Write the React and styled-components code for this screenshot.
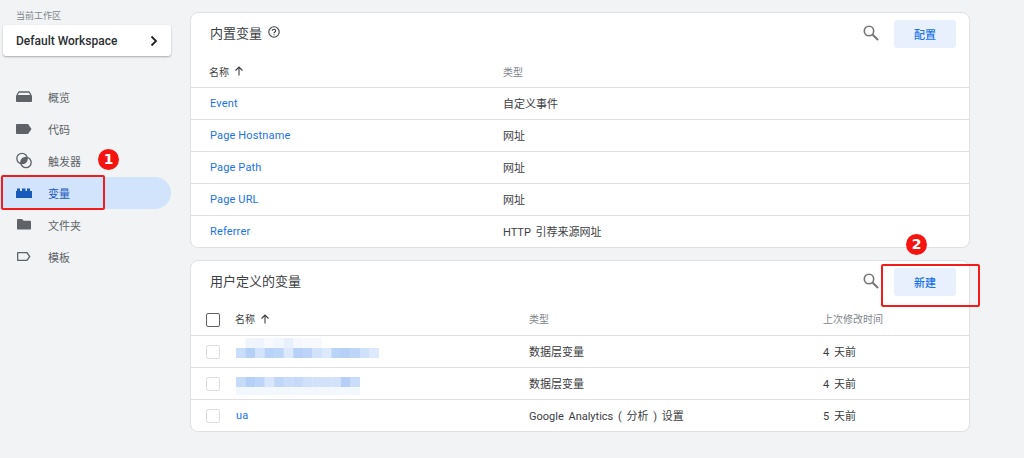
import React from "react";
import styled, { createGlobalStyle } from "styled-components";

const Global = createGlobalStyle`
  html, body { margin: 0; padding: 0; background: #f1f3f4; }
  body { font-family: Roboto, "Noto Sans CJK SC", sans-serif; color: #3c4043; }
  * { box-sizing: border-box; }
`;

const Page = styled.div`
  position: relative;
  width: 1024px;
  height: 458px;
  overflow: hidden;
  display: flex;
  background: #f1f3f4;
`;

const Sidebar = styled.aside`
  width: 190px;
  flex: none;
  padding-top: 11px;
`;

const WorkspaceLabel = styled.div`
  font-size: 9px;
  line-height: 11px;
  color: #80868b;
  padding-left: 16px;
  margin-bottom: 3px;
`;

const WorkspaceCard = styled.div`
  width: 168px;
  height: 31px;
  margin-left: 3px;
  padding: 0 12px 0 13px;
  display: flex;
  align-items: center;
  justify-content: space-between;
  background: #fff;
  border-radius: 3px;
  box-shadow: 0 1px 2px rgba(60, 64, 67, 0.4);
  font-size: 12px;
  font-weight: 500;
  color: #2b2e31;
`;

const Nav = styled.nav`
  margin-top: 25px;
  display: flex;
  flex-direction: column;
  width: 171px;
`;

const NavItem = styled.div`
  height: 32px;
  display: flex;
  align-items: center;
  padding-left: 16px;
  gap: 16px;
  font-size: 11px;
  border-radius: ${(p) => (p.$active ? "0 16px 16px 0" : "0")};
  background: ${(p) => (p.$active ? "#d2e3fc" : "transparent")};
  color: ${(p) => (p.$active ? "#185abc" : "#5f6368")};
  svg { flex: none; fill: currentColor; stroke: currentColor; stroke-width: 0; overflow: visible; }
`;

const Main = styled.main`
  width: 780px;
  flex: none;
  padding-top: 12px;
  display: flex;
  flex-direction: column;
  gap: 12px;
`;

const Card = styled.section`
  background: #fff;
  border: 1px solid #e0e0e0;
  border-radius: 8px;
  overflow: hidden;
`;

const CardHeader = styled.header`
  height: ${(p) => p.$height}px;
  padding: 7px 13px 0 19px;
  display: flex;
  align-items: flex-start;
`;

const CardTitle = styled.h2`
  margin: 0;
  height: 24px;
  display: flex;
  align-items: center;
  gap: 6px;
  font-size: 13px;
  font-weight: 400;
  color: #3c4043;
`;

const HeaderActions = styled.div`
  margin-left: auto;
  display: flex;
  align-items: center;
  height: 28px;
  gap: 14px;
  color: #757575;
  > svg { margin-bottom: 3px; }
`;

const ActionButton = styled.button`
  width: 62px;
  height: 28px;
  border: 0;
  padding: 0;
  border-radius: 3px;
  background: #e8f0fe;
  color: #1a73e8;
  font: 500 11px Roboto, "Noto Sans CJK SC", sans-serif;
`;

const Row = styled.div`
  display: grid;
  grid-template-columns: ${(p) => p.$columns};
  align-items: center;
  height: ${(p) => p.$height || 32}px;
  padding-left: ${(p) => p.$pad}px;
  border-bottom: ${(p) => (p.$last ? "0" : "1px solid #e0e0e0")};
  font-size: 11px;
  word-spacing: 2px;
  color: #3c4043;
`;

const TextCell = styled.span`
  padding-bottom: 2px;
`;

const HeadCell = styled.div`
  display: flex;
  align-items: center;
  gap: 5px;
  padding-bottom: 2px;
  margin-left: ${(p) => (p.$strong ? "-1px" : "0")};
  font-size: 10px;
  color: ${(p) => (p.$strong ? "#3c4043" : "#80868b")};
`;

const LinkText = styled.span`
  color: #1a73e8;
  font-size: 11px;
  letter-spacing: 0.15px;
  word-spacing: 0;
`;

const Check = styled.span`
  display: block;
  width: 14px;
  height: 14px;
  border-radius: 2px;
  border: ${(p) => (p.$dark ? "1.5px solid #5f6368" : "1.5px solid #dadce0")};
`;

const Callout = styled.div`
  position: absolute;
  left: ${(p) => p.$x}px;
  top: ${(p) => p.$y}px;
  width: ${(p) => p.$w}px;
  height: ${(p) => p.$h}px;
  border: 2px solid #f11d1d;
  border-radius: 2px;
  pointer-events: none;
`;

const Badge = styled.div`
  position: absolute;
  left: ${(p) => p.$x}px;
  top: ${(p) => p.$y}px;
  width: 21px;
  height: 21px;
  border-radius: 50%;
  background: #f5140f;
  color: #fff;
  font: 700 14px/21px "DejaVu Sans", sans-serif;
  text-align: center;
`;

const MosaicSvg = styled.svg`
  display: block;
`;

const Search = () => (
  <svg width="18" height="18" viewBox="0 0 18 18" fill="none" stroke="currentColor">
    <circle cx="7" cy="7" r="4.7" strokeWidth="1.6" />
    <path d="M10.5 10.5 16 16" strokeWidth="2" />
  </svg>
);

const ArrowUp = () => (
  <svg width="10" height="10" viewBox="0 0 10 10" fill="none" stroke="#3c4043" strokeWidth="1.1">
    <path d="M5 9.5V1M1.5 4.5 5 1l3.5 3.5" />
  </svg>
);

const Help = () => (
  <svg width="12" height="12" viewBox="0 0 12 12" fill="none" stroke="#3c4043">
    <circle cx="6" cy="6" r="5.2" strokeWidth="1.1" />
    <path d="M4.3 4.8C4.3 3.8 5 3.2 6 3.2s1.7.6 1.7 1.5C7.7 6 6 6 6 7.3" strokeWidth="1.1" />
    <path d="M6 8.2v1.1" strokeWidth="1.1" />
  </svg>
);

const Chevron = () => (
  <svg width="10" height="12" viewBox="0 0 10 12" fill="none" stroke="#202124" strokeWidth="1.8">
    <path d="M2.5 1.5 7 6l-4.5 4.5" />
  </svg>
);

const icons = {
  overview: (
    <g>
      <path d="M1 5 3 2h10l2 3" fill="none" style={{ strokeWidth: 1.3 }} />
      <path d="M.8 5h14.4c.4 0 .8.4.8.8v5.4c0 .5-.4.8-.8.8H.8c-.4 0-.8-.3-.8-.8V5.8C0 5.4.4 5 .8 5Z" />
    </g>
  ),
  tag: <path d="M1 2h10.5c.4 0 .7.2.9.4L15.5 7l-3.1 4.6c-.2.2-.5.4-.9.4H1c-.6 0-1-.4-1-1V3c0-.6.4-1 1-1Z" />,
  trigger: (
    <g>
      <circle cx="6" cy="4.5" r="5.2" fill="none" style={{ strokeWidth: 1.3 }} />
      <circle cx="10" cy="8.5" r="5.2" fill="none" style={{ strokeWidth: 1.3 }} />
      <path d="M11 3.4A5.2 5.2 0 0 1 4.9 9.6 5.2 5.2 0 0 1 11 3.4Z" />
    </g>
  ),
  variable: <path d="M0 5h1V2.5h3V5h2V2.5h3.5V5H11V2.5h3V5h2v7H0Z" />,
  folder: <path d="M2 1h4l1.7 1.8H14c.6 0 1 .5 1 1v6.700c0 .6-.4 1-1 1H2c-.6 0-1-.4-1-1V2c0-.5.4-1 1-1Z" />,
  template: <path fillRule="evenodd" d="M2 2h8.800c.4 0 .7.2.9.4l2.800 4.100-2.800 4.100c-.2.2-.5.4-.9.4H2c-.6 0-1-.4-1-1V3c0-.6.4-1 1-1Zm.3 1.300v6.400h8.200l2.400-3.200-2.400-3.200Z" />,
};

const NavIcon = ({ name }) => (
  <svg width="16" height="14" viewBox="0 0 16 14">{icons[name]}</svg>
);

const mosaics = {
  first: {
    w: 143,
    y: 12,
    pale: ["#eff4fd", "#eef3fd", "#f7f9fe", "#f2f6fe", "#e9f0fd", "#f4f7fe", "#f7f9fe", "#f7f9fe"],
    bar: ["#c9dcfa", "#b4cff8", "#d3e3fb", "#b9d2f9", "#bdd5f9", "#dce8fc", "#b7d0f8", "#bcd4f9", "#d3e2fb", "#dde9fc", "#bad3f9", "#b7d0f8", "#bdd5f9", "#cfe0fb", "#dde9fc"],
  },
  second: {
    w: 124,
    y: 9,
    bar: ["#c6dafa", "#b4cff8", "#bdd5f9", "#d8e5fc", "#c1d7f9", "#c9dcfa", "#c5dafa", "#cfe0fb", "#d2e2fb", "#d2e2fb", "#d2e2fb", "#b5cff8", "#c9dcfa"],
  },
};

const Mosaic = ({ kind }) => {
  const m = mosaics[kind];
  const cw = m.w / m.bar.length;
  return (
    <MosaicSvg width={m.w} height="31" viewBox={`0 0 ${m.w} 31`}>
      {kind === "second" && <rect x="0" y={m.y + 10} width={m.w} height="8" fill="#f3f7fe" />}
      {m.pale && m.pale.map((color, i) => (
        <rect key={i} x={(i + 1) * 9.5} y="2" width="9.5" height="10" fill={color} />
      ))}
      {m.bar.map((color, i) => (
        <rect key={i} x={i * cw} y={m.y} width={cw + 0.3} height="10" fill={color} />
      ))}
    </MosaicSvg>
  );
};

const nav = [
  ["overview", "概览"],
  ["tag", "代码"],
  ["trigger", "触发器"],
  ["variable", "变量", true],
  ["folder", "文件夹"],
  ["template", "模板"],
];

const builtIn = [
  ["Event", "自定义事件"],
  ["Page Hostname", "网址"],
  ["Page Path", "网址"],
  ["Page URL", "网址"],
  ["Referrer", "HTTP 引荐来源网址"],
];

const BUILTIN_COLS = "293px 1fr";
const USER_COLS = "30px 293px 294px 1fr";

export default function App() {
  return (
    <Page>
      <Global />
      <Sidebar>
        <WorkspaceLabel>当前工作区</WorkspaceLabel>
        <WorkspaceCard>
          Default Workspace
          <Chevron />
        </WorkspaceCard>
        <Nav>
          {nav.map(([icon, label, active]) => (
            <NavItem key={icon} $active={active}>
              <NavIcon name={icon} />
              {label}
            </NavItem>
          ))}
        </Nav>
      </Sidebar>
      <Main>
        <Card>
          <CardHeader $height={44}>
            <CardTitle>
              内置变量
              <Help />
            </CardTitle>
            <HeaderActions>
              <Search />
              <ActionButton>配置</ActionButton>
            </HeaderActions>
          </CardHeader>
          <Row $columns={BUILTIN_COLS} $pad={19} $height={31}>
            <HeadCell $strong>名称 <ArrowUp /></HeadCell>
            <HeadCell>类型</HeadCell>
          </Row>
          {builtIn.map(([name, type], i) => {
            const last = i === builtIn.length - 1;
            return (
              <Row key={name} $columns={BUILTIN_COLS} $pad={19} $last={last} $height={last ? 31 : 32}>
                <LinkText>{name}</LinkText>
                <TextCell>{type}</TextCell>
              </Row>
            );
          })}
        </Card>
        <Card>
          <CardHeader $height={43}>
            <CardTitle>用户定义的变量</CardTitle>
            <HeaderActions>
              <Search />
              <ActionButton>新建</ActionButton>
            </HeaderActions>
          </CardHeader>
          <Row $columns={USER_COLS} $pad={15} $height={32}>
            <Check $dark />
            <HeadCell $strong>名称 <ArrowUp /></HeadCell>
            <HeadCell>类型</HeadCell>
            <HeadCell>上次修改时间</HeadCell>
          </Row>
          <Row $columns={USER_COLS} $pad={15}>
            <Check />
            <Mosaic kind="first" />
            <TextCell>数据层变量</TextCell>
            <TextCell>4 天前</TextCell>
          </Row>
          <Row $columns={USER_COLS} $pad={15}>
            <Check />
            <Mosaic kind="second" />
            <TextCell>数据层变量</TextCell>
            <TextCell>4 天前</TextCell>
          </Row>
          <Row $columns={USER_COLS} $pad={15} $last $height={31}>
            <Check />
            <LinkText>ua</LinkText>
            <TextCell>Google Analytics ( 分析 ) 设置</TextCell>
            <TextCell>5 天前</TextCell>
          </Row>
        </Card>
      </Main>
      <Callout $x={1} $y={175} $w={104} $h={35} />
      <Badge $x={98} $y={149}>1</Badge>
      <Callout $x={881} $y={264} $w={99} $h={43} />
      <Badge $x={906} $y={234}>2</Badge>
    </Page>
  );
}
